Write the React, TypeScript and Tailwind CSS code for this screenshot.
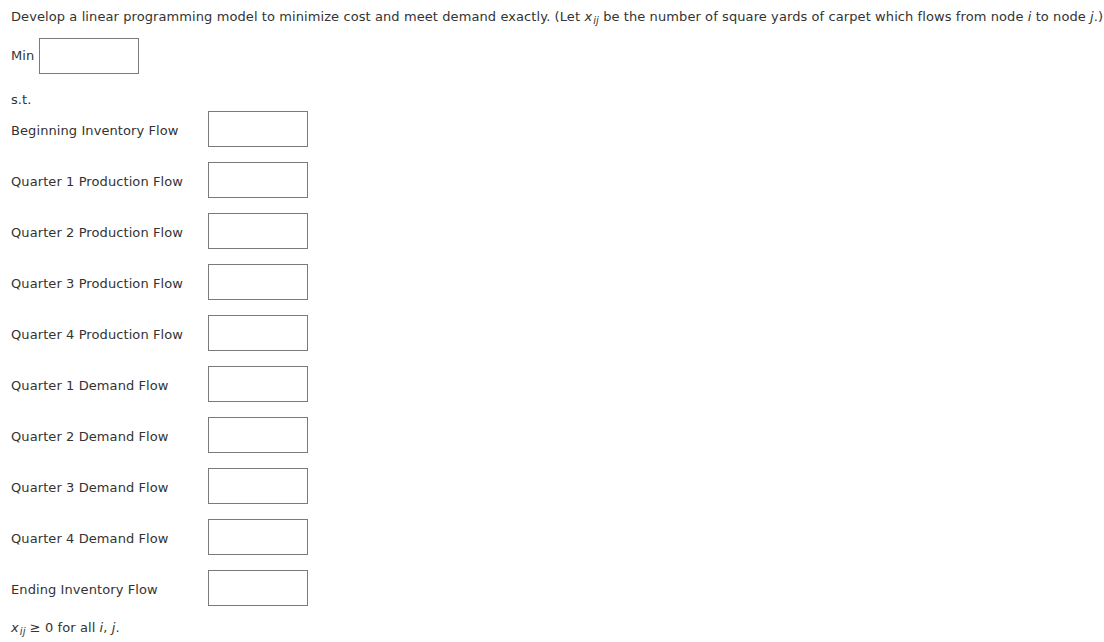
const rows = [
  "Beginning Inventory Flow",
  "Quarter 1 Production Flow",
  "Quarter 2 Production Flow",
  "Quarter 3 Production Flow",
  "Quarter 4 Production Flow",
  "Quarter 1 Demand Flow",
  "Quarter 2 Demand Flow",
  "Quarter 3 Demand Flow",
  "Quarter 4 Demand Flow",
  "Ending Inventory Flow",
];

function Xij() {
  return (
    <span className="whitespace-nowrap">
      <i>x</i>
      <sub className="relative top-[3px] ml-[1px] text-[10px] italic">ij</sub>
    </span>
  );
}

function Box({ className = "" }: { className?: string }) {
  return (
    <div className={`h-[36px] w-[100px] border border-[#7a7a7a] bg-white ${className}`}></div>
  );
}

export default function App() {
  return (
    <div
      className="min-h-screen bg-white pl-[11px] pt-[9px] text-[13px] leading-[16px] tracking-[0.09px] text-[#333]"
      style={{ fontFamily: '"DejaVu Sans", Verdana, sans-serif' }}
    >
      <p className="whitespace-nowrap">
        Develop a linear programming model to minimize cost and meet demand exactly. (Let <Xij /> be the
        number of square yards of carpet which flows from node <i>i</i> to node <i>j</i>.)
      </p>

      <div className="mt-[13px] flex items-center gap-[5px]">
        <span>Min</span>
        <Box className="w-[99px] h-[35px]" />
      </div>

      <p className="mt-[18px]">s.t.</p>

      <div className="mt-[3px] flex flex-col gap-[15px]">
        {rows.map((r) => (
          <div key={r} className="flex items-center">
            <span className="mt-[3px] w-[197px]">{r}</span>
            <Box />
          </div>
        ))}
      </div>

      <p className="mt-[14px]">
        <Xij /> ≥ 0 for all <i>i</i>, <i>j</i>.
      </p>
    </div>
  );
}
